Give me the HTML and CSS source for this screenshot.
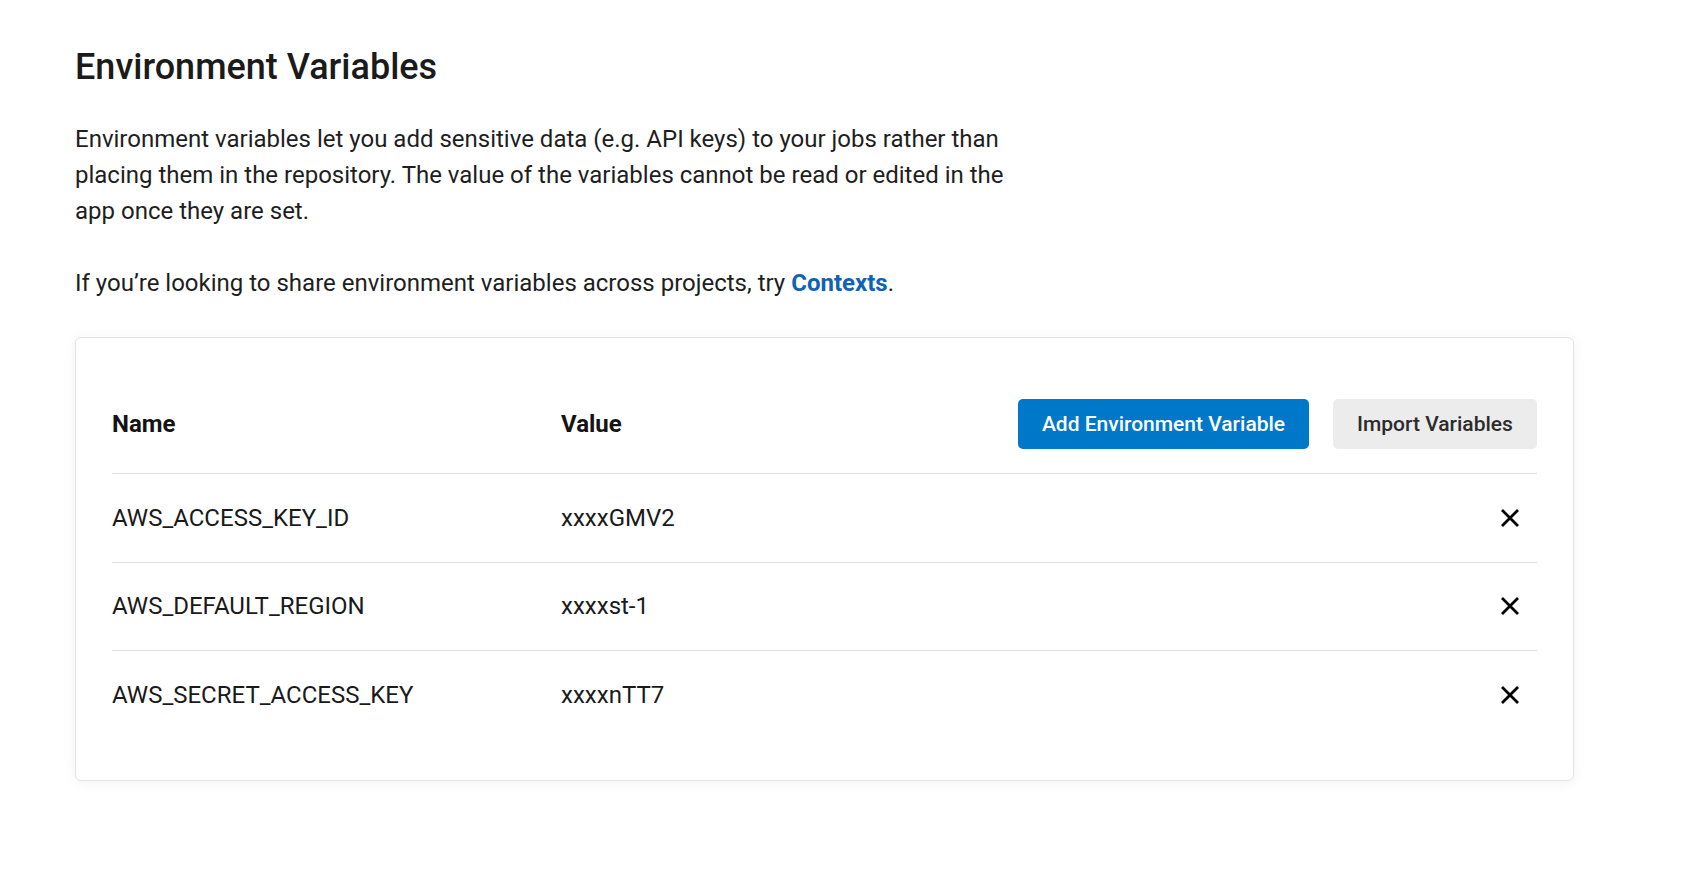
FILE: index.html
```html
<!DOCTYPE html>
<html lang="en">
<head>
<meta charset="utf-8">
<title>Environment Variables</title>
<link rel="stylesheet" href="styles.css">
</head>
<body>
<main class="page">
  <h1 class="title">Environment Variables</h1>
  <p class="intro">Environment variables let you add sensitive data (e.g. API keys) to your jobs rather than placing them in the repository. The value of the variables cannot be read or edited in the app once they are set.</p>
  <p class="intro">If you’re looking to share environment variables across projects, try <a class="link" href="#">Contexts</a>.</p>

  <section class="card">
    <div class="row head">
      <div class="col-name">Name</div>
      <div class="col-value">Value</div>
      <div class="actions">
        <button class="btn primary">Add Environment Variable</button>
        <button class="btn secondary">Import Variables</button>
      </div>
    </div>
    <div class="row item">
      <div class="col-name">AWS_ACCESS_KEY_ID</div>
      <div class="col-value">xxxxGMV2</div>
      <button class="remove" aria-label="Remove"><svg viewBox="0 0 20 20" width="20" height="20"><path d="M2 2 L18 18 M18 2 L2 18" stroke="#000" stroke-width="2.8" fill="none"/></svg></button>
    </div>
    <div class="row item">
      <div class="col-name">AWS_DEFAULT_REGION</div>
      <div class="col-value">xxxxst-1</div>
      <button class="remove" aria-label="Remove"><svg viewBox="0 0 20 20" width="20" height="20"><path d="M2 2 L18 18 M18 2 L2 18" stroke="#000" stroke-width="2.8" fill="none"/></svg></button>
    </div>
    <div class="row item">
      <div class="col-name">AWS_SECRET_ACCESS_KEY</div>
      <div class="col-value">xxxxnTT7</div>
      <button class="remove" aria-label="Remove"><svg viewBox="0 0 20 20" width="20" height="20"><path d="M2 2 L18 18 M18 2 L2 18" stroke="#000" stroke-width="2.8" fill="none"/></svg></button>
    </div>
  </section>
</main>
</body>
</html>
```

FILE: styles.css
```css
* { box-sizing: border-box; }

html, body {
  margin: 0;
  padding: 0;
  background: #ffffff;
}

body {
  font-family: Roboto, "Liberation Sans", Arial, sans-serif;
  color: #161616;
}

.page {
  padding: 46px 121px 40px 75px;
}

.title {
  margin: 0;
  font-size: 36px;
  line-height: 43px;
  font-weight: 500;
  color: #1b1b1b;
}

.intro {
  margin: 32px 0 0 0;
  max-width: 940px;
  font-size: 24px;
  line-height: 36px;
  color: #1e1e1e;
}

.intro + .intro {
  margin-top: 36px;
}

.link {
  color: #0e63b4;
  font-weight: 700;
  text-decoration: none;
}

.card {
  margin-top: 36px;
  width: 1499px;
  border: 1px solid #e4e4e4;
  border-radius: 6px;
  box-shadow: 0 2px 14px rgba(0, 0, 0, 0.05);
  padding: 36px 36px 41px 36px;
  background: #fff;
}

.row {
  display: flex;
  align-items: center;
  font-size: 24px;
}

.head {
  padding: 25px 0 24px 0;
  font-weight: 700;
  color: #141414;
}

.item {
  height: 88.5px;
  border-top: 1px solid #e2e2e2;
  color: #1a1a1a;
}

.col-name {
  width: 449px;
  flex: none;
}

.col-value {
  flex: 1;
}

.actions {
  display: flex;
  gap: 24px;
}

.btn {
  height: 50px;
  border: none;
  border-radius: 5px;
  font-family: Roboto, "Liberation Sans", Arial, sans-serif;
  font-size: 21px;
  font-weight: 500;
  cursor: pointer;
}

.primary {
  width: 291px;
  background: #0078ca;
  color: #fff;
}

.secondary {
  width: 204px;
  background: #ececec;
  color: #2b2b2b;
}

.remove {
  border: none;
  background: none;
  padding: 0;
  margin-right: 17px;
  width: 20px;
  height: 20px;
  display: flex;
  cursor: pointer;
}
```
